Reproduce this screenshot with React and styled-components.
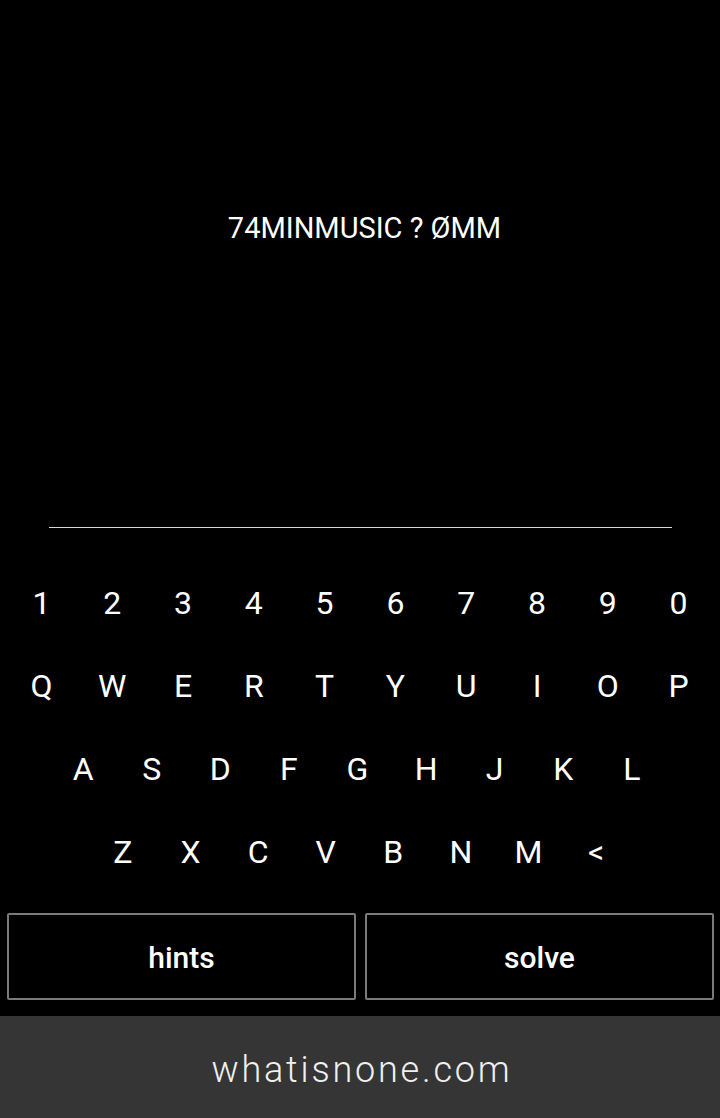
import React from 'react';
import styled, { createGlobalStyle } from 'styled-components';

const GlobalStyle = createGlobalStyle`
  html, body {
    margin: 0;
    padding: 0;
    background: #000;
  }
  body {
    font-family: Roboto, "Liberation Sans", sans-serif;
  }
`;

const Page = styled.div`
  width: 720px;
  height: 1118px;
  background: #000;
  color: #fff;
  display: flex;
  flex-direction: column;
  overflow: hidden;
`;

const Title = styled.div`
  margin-top: 212px;
  height: 32px;
  line-height: 32px;
  font-size: 29px;
  text-align: center;
  padding-left: 9px;
`;

const Line = styled.div`
  margin: 283px 48px 0 49px;
  height: 1px;
  background: #d8d8d8;
`;

const Keyboard = styled.div`
  margin-top: 33px;
  display: flex;
  flex-direction: column;
`;

const Row = styled.div`
  height: 83px;
  display: flex;
  justify-content: center;
  align-items: center;
  transform: translateX(${p => p.$shift || 0}px);
`;

const Key = styled.div`
  width: ${p => p.$w}px;
  text-align: center;
  font-size: 32px;
  line-height: 40px;
  color: #fff;
`;

const Buttons = styled.div`
  margin-top: 20px;
  padding: 0 6px 0 7px;
  display: flex;
  gap: 9px;
`;

const Button = styled.div`
  flex: 1;
  height: 87px;
  box-sizing: border-box;
  border: 2px solid #7a7a7a;
  border-radius: 2px;
  display: flex;
  align-items: center;
  justify-content: center;
  padding-top: 2px;
  font-size: 30px;
  font-weight: 500;
  color: #fff;
`;

const Footer = styled.div`
  margin-top: 16px;
  flex: 1;
  background: #353535;
  display: flex;
  align-items: center;
  justify-content: center;
  padding-top: 6px;
  padding-left: 4px;
  font-size: 36px;
  font-weight: 300;
  letter-spacing: 2.8px;
  color: #f0f0f0;
`;

const rows = [
  { keys: '1234567890'.split(''), w: 70.8, shift: 0 },
  { keys: 'QWERTYUIOP'.split(''), w: 70.8, shift: 0 },
  { keys: 'ASDFGHJKL'.split(''), w: 68.6, shift: -2.5 },
  { keys: 'ZXCVBNM<'.split(''), w: 67.6, shift: -0.5 },
];

export default function App() {
  return (
    <Page>
      <GlobalStyle />
      <Title>74MINMUSIC ? ØMM</Title>
      <Line />
      <Keyboard>
        {rows.map((r, i) => (
          <Row key={i} $shift={r.shift}>
            {r.keys.map(k => (
              <Key key={k} $w={r.w}>{k}</Key>
            ))}
          </Row>
        ))}
      </Keyboard>
      <Buttons>
        <Button>hints</Button>
        <Button>solve</Button>
      </Buttons>
      <Footer>whatisnone.com</Footer>
    </Page>
  );
}
